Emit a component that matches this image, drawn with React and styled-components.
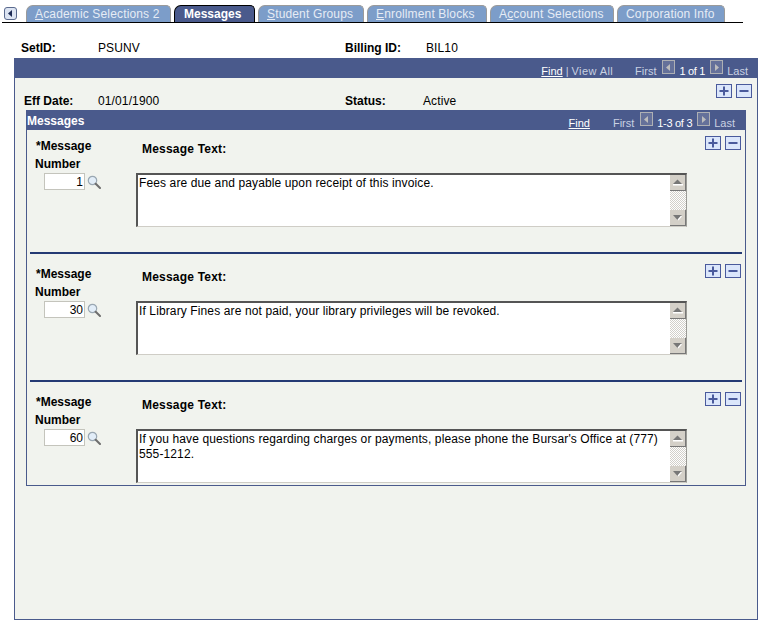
import React from 'react';
import styled, { createGlobalStyle } from 'styled-components';

const GlobalStyle = createGlobalStyle`
  html, body { margin: 0; padding: 0; background: #ffffff; }
  body { font-family: "Liberation Sans", Arial, sans-serif; font-size: 12px; color: #000000; }
`;

const tabList = [
  { id: 1, label: 'Academic Selections 2', key: 'A', width: 145 },
  { id: 2, label: 'Messages', active: true, width: 81 },
  { id: 3, label: 'Student Groups', key: 'S', width: 106 },
  { id: 4, label: 'Enrollment Blocks', key: 'E', width: 120 },
  { id: 5, label: 'Account Selections', key: 'c', keyIdx: 1, width: 124 },
  { id: 6, label: 'Corporation Info', width: 108 },
];

const messageList = [
  { id: 1, number: '1', text: 'Fees are due and payable upon receipt of this invoice.' },
  { id: 2, number: '30', text: 'If Library Fines are not paid, your library privileges will be revoked.' },
  { id: 3, number: '60', text: "If you have questions regarding charges or payments, please phone the Bursar's Office at (777) 555-1212." },
];

const Page = styled.div`
  width: 762px;
  height: 622px;
  overflow: hidden;
  padding: 5px 0 0 2px;
  box-sizing: border-box;
`;

const TabBar = styled.div`
  display: flex;
  align-items: flex-end;
  width: 741px;
  height: 18px;
  box-sizing: border-box;
  border-bottom: 1px solid #000000;
`;

const ScrollTab = styled.button`
  width: 13px;
  height: 13px;
  margin: 0 9px 2px 2px;
  padding: 0;
  box-sizing: border-box;
  border: 1px solid #5a6a8e;
  border-radius: 3px;
  background: #dce4f2;
  display: flex;
  align-items: center;
  justify-content: center;
`;

const Tab = styled.div`
  width: ${(p) => p.$width}px;
  height: 17px;
  margin-right: 3px;
  box-sizing: border-box;
  padding-left: ${(p) => (p.$active ? 9 : 8)}px;
  border-radius: 7px 5px 0 0;
  line-height: 16px;
  white-space: nowrap;
  letter-spacing: ${(p) => (p.$active ? 0 : 0.15)}px;
  color: ${(p) => (p.$active ? '#ffffff' : '#e6ecf5')};
  font-weight: ${(p) => (p.$active ? 'bold' : 'normal')};
  background: ${(p) => (p.$active ? '#4a5a8c' : '#7c9dc9')};
  border: 1px solid ${(p) => (p.$active ? '#000000' : '#9a9a9a')};
  border-bottom: none;
  u { text-decoration: underline; }
`;

const KeyRow = styled.div`
  display: grid;
  grid-template-columns: 77px 247px 81px auto;
  height: 35px;
  box-sizing: border-box;
  padding: 14px 0 0 19px;
  align-items: center;
`;

const Label = styled.span`
  font-weight: bold;
`;

const Value = styled.span`
  color: #000000;
  letter-spacing: 0.12px;
`;

const OuterPanel = styled.div`
  margin-left: 12px;
  width: 744px;
  height: 562px;
  box-sizing: border-box;
  border: 1px solid #4a5a8c;
  border-top: none;
  background: #f1f3ee;
`;

const OuterHeader = styled.div`
  height: 20px;
  background: #4a5a8c;
  display: flex;
  justify-content: flex-end;
  align-items: center;
  padding-right: 9px;
  font-size: 11px;
  color: #c9d1e2;
`;

const NavLink = styled.span`
  color: #ffffff;
  text-decoration: underline;
  padding-top: 6px;
`;

const NavText = styled.span`
  color: ${(p) => (p.$bright ? '#ffffff' : '#c9d1e2')};
  margin: ${(p) => p.$margin || '0'};
  padding-top: 6px;
  letter-spacing: ${(p) => p.$spacing || 0}px;
`;

const NavGroup = styled.div`
  display: flex;
  align-items: center;
`;

const NavArrow = styled.span`
  display: inline-flex;
  align-items: center;
  justify-content: center;
  width: 13px;
  height: 14px;
  margin: ${(p) => p.$margin};
  box-sizing: border-box;
  background: #65719a;
  border: 1px solid #aeb0b4;
  position: relative;
  top: -1px;
`;

const EffRow = styled.div`
  display: flex;
  justify-content: space-between;
  height: 32px;
  padding: 6px 5px 0 9px;
  box-sizing: border-box;
`;

const EffField = styled.div`
  display: grid;
  grid-template-columns: 74px 247px 78px auto;
  align-items: center;
  height: 16px;
  margin-top: 9px;
`;

const ButtonPair = styled.div`
  display: flex;
  gap: 4px;
`;

const SquareButton = styled.button`
  width: 16px;
  height: 14px;
  padding: 0;
  box-sizing: border-box;
  border: 1px solid #4a5a9c;
  background: #dbe6fb;
  display: flex;
  align-items: center;
  justify-content: center;
`;

const InnerPanel = styled.div`
  margin-left: 11px;
  width: 720px;
  height: 376px;
  box-sizing: border-box;
  border: 1px solid #4a5a8c;
  border-top: none;
`;

const InnerHeader = styled.div`
  height: 20px;
  background: #4a5a8c;
  margin: 0 -1px;
  display: flex;
  align-items: center;
  justify-content: space-between;
  padding: 0 11px 0 1px;
  font-size: 11px;
  color: #c9d1e2;
`;

const InnerTitle = styled.span`
  color: #ffffff;
  font-weight: bold;
  font-size: 12px;
  padding-top: 1px;
`;

const MessageRow = styled.div`
  position: relative;
  display: grid;
  grid-template-columns: 109px 551px 1fr;
  height: ${(p) => (p.$last ? 108 : 128)}px;
  box-sizing: border-box;
  padding: 7px 4px 0 0;
`;

const Separator = styled.div`
  position: absolute;
  left: 3px;
  right: 3px;
  bottom: 4px;
  height: 2px;
  background: #243a74;
`;

const NumberCol = styled.div`
  display: flex;
  flex-direction: column;
  padding-left: 8px;
`;

const NumberLabel = styled.div`
  font-weight: bold;
  line-height: 18px;
  padding-left: ${(p) => p.$indent || 0}px;
`;

const NumberField = styled.div`
  display: flex;
  align-items: center;
  gap: 2px;
  margin: 0 0 0 9px;
`;

const NumberInput = styled.input`
  width: 41px;
  height: 17px;
  box-sizing: border-box;
  border: 1px solid #c4c4bc;
  background: #ffffff;
  text-align: right;
  padding: 0 1px;
  font: 12px "Liberation Sans", Arial, sans-serif;
  color: #000000;
`;

const TextCol = styled.div`
  display: flex;
  flex-direction: column;
`;

const TextLabel = styled.div`
  font-weight: bold;
  line-height: 16px;
  letter-spacing: 0.2px;
  padding: 4px 0 0 6px;
  height: 36px;
  box-sizing: border-box;
`;

const TextBox = styled.div`
  display: flex;
  width: 551px;
  height: 54px;
  box-sizing: border-box;
  background: #ffffff;
  border-top: 2px solid #555555;
  border-left: 2px solid #555555;
  border-bottom: 1px solid #cfcdc6;
  border-right: 1px solid #9b9b96;
`;

const TextBody = styled.div`
  flex: 1;
  padding: 1px 6px 0 1px;
  line-height: 15px;
  letter-spacing: 0.12px;
`;

const ScrollBar = styled.div`
  width: 16px;
  display: flex;
  flex-direction: column;
  background-color: #f4f3f0;
  background-image: repeating-conic-gradient(#d2d0ca 0 25%, #ffffff 0 50%);
  background-size: 2px 2px;
`;

const ScrollButton = styled.div`
  width: 16px;
  height: 16px;
  box-sizing: border-box;
  background: #d4d0c8;
  border-right: 1px solid #777777;
  border-bottom: 1px solid #777777;
  display: flex;
  align-items: center;
  justify-content: center;
`;

const ScrollTrack = styled.div`
  flex: 1;
`;

const RowButtons = styled.div`
  display: flex;
  justify-content: flex-end;
  margin-top: -1px;
`;

const Triangle = ({ dir, color = '#ffffff', size = 9 }) => {
  const pts = { left: '6,1 2,4.5 6,8', right: '3,1 7,4.5 3,8' };
  return (
    <svg width={size} height={size} viewBox="0 0 9 9">
      <polygon points={pts[dir]} fill={color} />
    </svg>
  );
};

const ScrollArrow = ({ dir }) => (
  <svg width="11" height="9" viewBox="0 0 11 9">
    {dir === 'up' ? (
      <>
        <polygon points="1,6 5.5,1.5 10,6" fill="#777777" />
        <rect x="1" y="6" width="10" height="1.5" fill="#ffffff" />
      </>
    ) : (
      <>
        <polygon points="1,2 10,2 5.5,7" fill="#777777" />
        <path d="M9.5 3L6 7" stroke="#ffffff" strokeWidth="1.2" />
      </>
    )}
  </svg>
);

const PlusIcon = () => (
  <svg width="10" height="10" viewBox="0 0 10 10">
    <path d="M5 0.5v9M0.5 5h9" stroke="#4a5a9c" strokeWidth="2" />
  </svg>
);

const MinusIcon = () => (
  <svg width="10" height="10" viewBox="0 0 10 10">
    <path d="M0.5 5h9" stroke="#4a5a9c" strokeWidth="2" />
  </svg>
);

const LensIcon = () => (
  <svg width="14" height="14" viewBox="0 0 14 14">
    <circle cx="5.5" cy="5.5" r="4.2" fill="#e2edf8" stroke="#9aa7b2" strokeWidth="1.2" />
    <path d="M8.7 8.7l4.3 4.3" stroke="#6f6f6f" strokeWidth="2" strokeLinecap="round" />
  </svg>
);

const renderTabLabel = (tab) => {
  if(!tab.key) return tab.label;
  const idx = tab.keyIdx ?? 0;
  return <>{tab.label.slice(0, idx)}<u>{tab.label[idx]}</u>{tab.label.slice(idx + 1)}</>;
};

const App = () => {
  return (
    <>
      <GlobalStyle />
      <Page>
        <TabBar>
          <ScrollTab aria-label="previous tab"><Triangle dir="left" color="#1d2b55" /></ScrollTab>
          {tabList.map((tab) => (
            <Tab key={tab.id} $active={tab.active} $width={tab.width}>{renderTabLabel(tab)}</Tab>
          ))}
        </TabBar>

        <KeyRow>
          <Label>SetID:</Label>
          <Value>PSUNV</Value>
          <Label>Billing ID:</Label>
          <Value>BIL10</Value>
        </KeyRow>

        <OuterPanel>
          <OuterHeader>
            <NavLink>Find</NavLink>
            <NavText $margin="0 3px">|</NavText>
            <NavText $spacing={0.4}>View All</NavText>
            <NavText $margin="0 0 0 22px">First</NavText>
            <NavArrow $margin="0 4px 0 6px"><Triangle dir="left" color="#bdbdbd" /></NavArrow>
            <NavText $bright $spacing={-0.3}>1 of 1</NavText>
            <NavArrow $margin="0 4px 0 5px"><Triangle dir="right" color="#bdbdbd" /></NavArrow>
            <NavText>Last</NavText>
          </OuterHeader>

          <EffRow>
            <EffField>
              <Label>Eff Date:</Label>
              <Value>01/01/1900</Value>
              <Label>Status:</Label>
              <Value>Active</Value>
            </EffField>
            <ButtonPair>
              <SquareButton aria-label="add"><PlusIcon /></SquareButton>
              <SquareButton aria-label="delete"><MinusIcon /></SquareButton>
            </ButtonPair>
          </EffRow>

          <InnerPanel>
            <InnerHeader>
              <InnerTitle>Messages</InnerTitle>
              <NavGroup>
                <NavLink>Find</NavLink>
                <NavText $margin="0 0 0 23px">First</NavText>
                <NavArrow $margin="0 4px 0 6px"><Triangle dir="left" color="#bdbdbd" /></NavArrow>
                <NavText $bright $spacing={-0.3}>1-3 of 3</NavText>
                <NavArrow $margin="0 4px 0 5px"><Triangle dir="right" color="#bdbdbd" /></NavArrow>
                <NavText>Last</NavText>
              </NavGroup>
            </InnerHeader>

            {messageList.map((msg, idx) => {
              const last = idx === messageList.length - 1;
              return (
                <MessageRow key={msg.id} $last={last}>
                  <NumberCol>
                    <NumberLabel $indent={1}>*Message</NumberLabel>
                    <NumberLabel>Number</NumberLabel>
                    <NumberField>
                      <NumberInput readOnly value={msg.number} />
                      <LensIcon />
                    </NumberField>
                  </NumberCol>
                  <TextCol>
                    <TextLabel>Message Text:</TextLabel>
                    <TextBox>
                      <TextBody>{msg.text}</TextBody>
                      <ScrollBar>
                        <ScrollButton><ScrollArrow dir="up" /></ScrollButton>
                        <ScrollTrack />
                        <ScrollButton><ScrollArrow dir="down" /></ScrollButton>
                      </ScrollBar>
                    </TextBox>
                  </TextCol>
                  <RowButtons>
                    <ButtonPair>
                      <SquareButton aria-label="add"><PlusIcon /></SquareButton>
                      <SquareButton aria-label="delete"><MinusIcon /></SquareButton>
                    </ButtonPair>
                  </RowButtons>
                  {!last && <Separator />}
                </MessageRow>
              );
            })}
          </InnerPanel>
        </OuterPanel>
      </Page>
    </>
  );
};

export default App;
